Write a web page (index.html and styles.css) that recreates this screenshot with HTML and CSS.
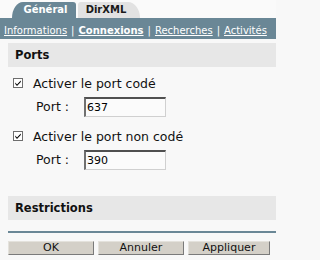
FILE: index.html
```html
<!DOCTYPE html>
<html lang="fr">
<head>
<meta charset="utf-8">
<title>Connexions</title>
<link rel="stylesheet" href="styles.css">
</head>
<body>
<div class="tabs">
  <div class="tab tab-active">Général</div>
  <div class="tab tab-other">DirXML</div>
</div>
<div class="subnav">
  <a class="link">Informations</a><span class="sep">|</span><a class="link current">Connexions</a><span class="sep">|</span><a class="link">Recherches</a><span class="sep">|</span><a class="link">Activités</a>
</div>
<div class="panel">
  <div class="band">Ports</div>
  <div class="opt opt-first">
    <span class="check"><svg width="10" height="10" viewBox="0 0 10 10"><rect x="0.5" y="0.5" width="9" height="9" fill="#ffffff" stroke="#6e6e6e"/><path d="M2.3 4.6 L4 6.4 L7.8 2.6 L7.8 4.1 L4 7.9 L2.3 6.1 Z" fill="#000"/></svg></span>
    <span class="opt-label">Activer le port codé</span>
  </div>
  <div class="port-row">
    <span class="port-label">Port :</span>
    <input class="port-input" type="text" value="637">
  </div>
  <div class="opt opt-second">
    <span class="check"><svg width="10" height="10" viewBox="0 0 10 10"><rect x="0.5" y="0.5" width="9" height="9" fill="#ffffff" stroke="#6e6e6e"/><path d="M2.3 4.6 L4 6.4 L7.8 2.6 L7.8 4.1 L4 7.9 L2.3 6.1 Z" fill="#000"/></svg></span>
    <span class="opt-label">Activer le port non codé</span>
  </div>
  <div class="port-row">
    <span class="port-label">Port :</span>
    <input class="port-input" type="text" value="390">
  </div>
  <div class="band band-restr">Restrictions</div>
  <div class="rule"></div>
  <div class="buttons">
    <button class="btn">OK</button>
    <button class="btn">Annuler</button>
    <button class="btn btn-last">Appliquer</button>
  </div>
</div>
</body>
</html>
```
FILE: styles.css
```css
html, body {
  margin: 0;
  padding: 0;
}
body {
  width: 276px;
  height: 260px;
  overflow: hidden;
  background: #f8f8f8;
  font-family: "DejaVu Sans", Verdana, sans-serif;
  color: #111;
}
.tabs {
  display: flex;
  align-items: flex-end;
  height: 18px;
  padding-left: 12px;
  gap: 2px;
  background: #fafafa;
}
.tab {
  height: 16px;
  line-height: 16px;
  font-size: 10px;
  font-weight: bold;
  text-align: center;
  box-sizing: border-box;
}
.tab-active {
  width: 64px;
  padding-left: 3px;
  background: #6a8796;
  color: #fff;
  border-radius: 11px 3px 0 0 / 16px 3px 0 0;
}
.tab-other {
  width: 62px;
  padding-right: 6px;
  background: #e2e2e2;
  color: #1a1a1a;
  border-radius: 3px 12px 0 0 / 3px 16px 0 0;
}
.subnav {
  height: 21px;
  box-sizing: border-box;
  padding: 7px 4px 0;
  line-height: 12px;
  font-size: 10px;
  background: #6a8796;
  color: #fff;
  white-space: nowrap;
}
.link {
  color: #fff;
  text-decoration: underline;
}
.current {
  font-weight: bold;
}
.sep {
  padding: 0 4px;
}
.panel {
  margin-left: 8px;
}
.band {
  margin-top: 4px;
  height: 24px;
  line-height: 24px;
  padding-left: 7px;
  background: #e7e7e7;
  font-size: 11.5px;
  font-weight: bold;
  color: #111;
}
.band-restr {
  margin-top: 26px;
}
.opt {
  display: flex;
  align-items: flex-start;
  padding-left: 5px;
  line-height: 16px;
  font-size: 12.5px;
}
.opt-first {
  margin-top: 9px;
}
.opt-second {
  margin-top: 12px;
}
.check {
  display: block;
  width: 10px;
  height: 10px;
  margin-top: 2px;
}
.check svg {
  display: block;
}
.opt-label {
  margin-left: 10px;
}
.port-row {
  display: flex;
  align-items: center;
  height: 20px;
  padding-left: 28px;
  margin-top: 5px;
  font-size: 12.5px;
  line-height: 16px;
}
.opt-second + .port-row {
  margin-top: 5px;
}
.port-label {
  width: 48px;
}
.port-input {
  width: 82px;
  height: 20px;
  box-sizing: border-box;
  margin: 0;
  padding: 0 1px;
  border-style: solid;
  border-width: 2px 1px 1px 2px;
  border-color: #505050 #d0d0d0 #d0d0d0 #707070;
  background: #fbfbfb;
  font-family: "DejaVu Sans", Verdana, sans-serif;
  font-size: 11px;
  color: #000;
  outline: none;
}
.rule {
  margin-top: 11px;
  height: 2px;
  background: #6a8796;
}
.buttons {
  display: flex;
  gap: 4px;
  margin-top: 8px;
}
.btn {
  width: 86px;
  height: 14px;
  box-sizing: border-box;
  margin: 0;
  padding: 0;
  border-style: solid;
  border-width: 1px;
  border-color: #e4e2dc #7a7a7a #7a7a7a #e4e2dc;
  background: #d4d0c8;
  font-family: "DejaVu Sans", Verdana, sans-serif;
  font-size: 11px;
  line-height: 12px;
  color: #111;
}
.btn-last {
  width: 82px;
}
```
